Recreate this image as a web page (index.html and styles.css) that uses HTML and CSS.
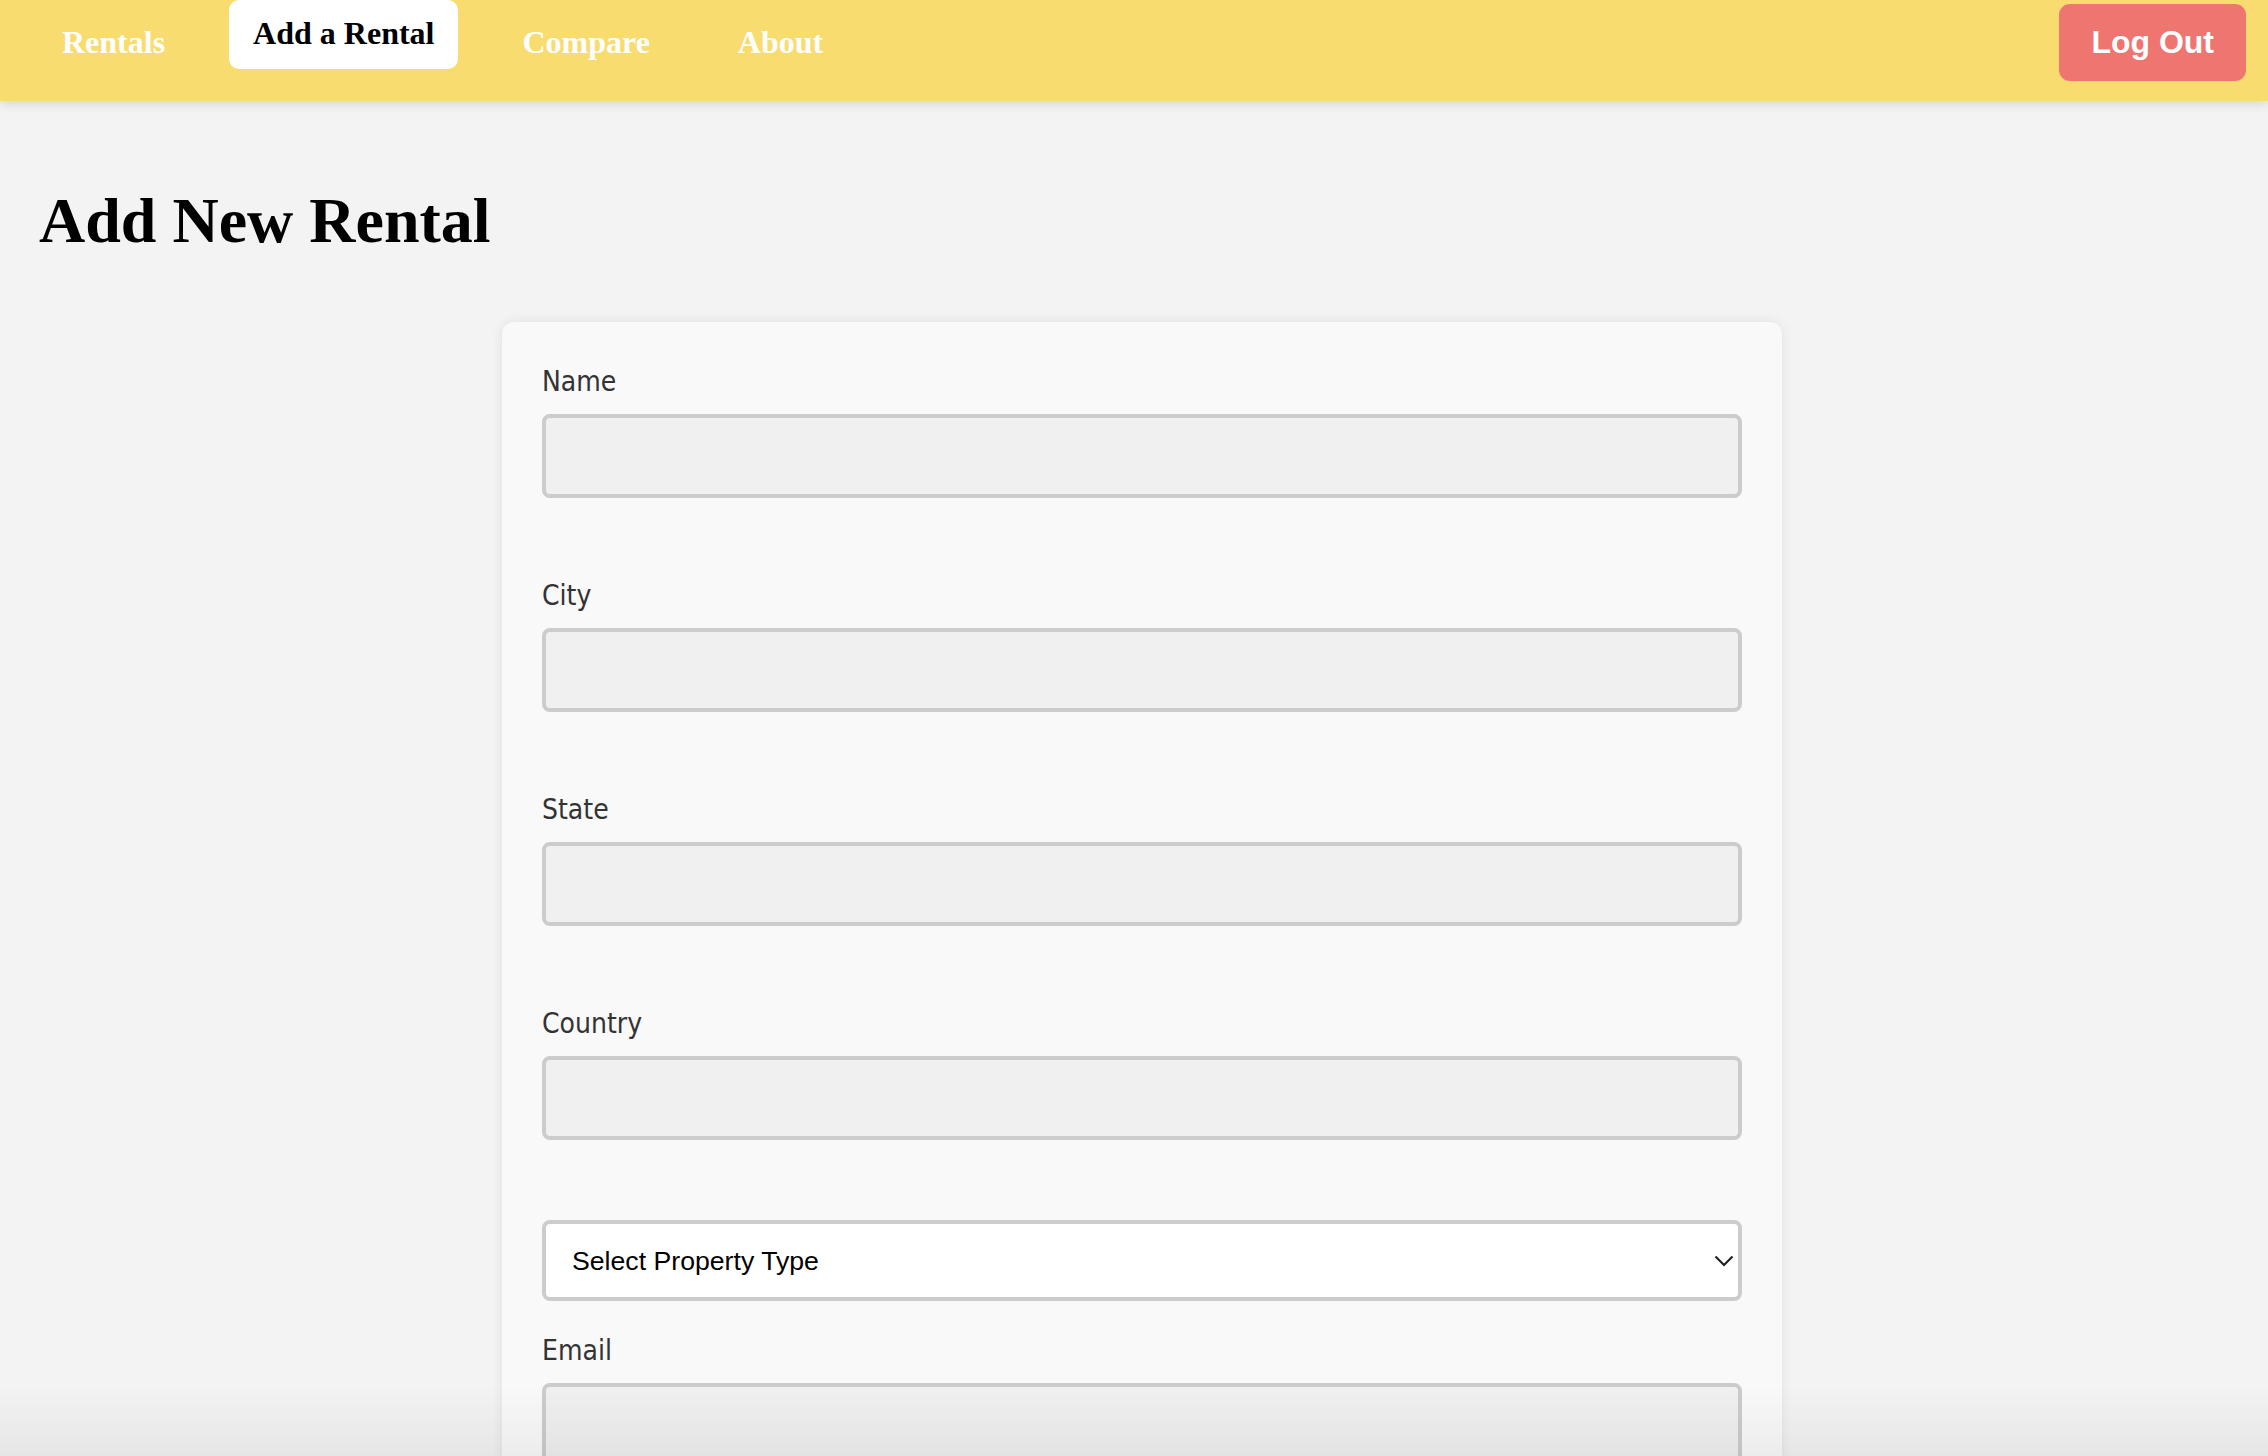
FILE: index.html
```html
<!DOCTYPE html>
<html lang="en">
<head>
<meta charset="utf-8">
<title>Add New Rental</title>
<link rel="stylesheet" href="styles.css">
</head>
<body>
<nav class="navbar">
  <a class="nav-link" href="#">Rentals</a>
  <a class="nav-link active" href="#">Add a Rental</a>
  <a class="nav-link" href="#">Compare</a>
  <a class="nav-link" href="#">About</a>
  <button class="logout" type="button">Log Out</button>
</nav>
<main class="main">
  <h1 class="page-title">Add New Rental</h1>
  <div class="form-wrap">
    <form class="card">
      <div class="field">
        <label class="label" for="name">Name</label>
        <input class="input" id="name" type="text">
      </div>
      <div class="field">
        <label class="label" for="city">City</label>
        <input class="input" id="city" type="text">
      </div>
      <div class="field">
        <label class="label" for="state">State</label>
        <input class="input" id="state" type="text">
      </div>
      <div class="field">
        <label class="label" for="country">Country</label>
        <input class="input" id="country" type="text">
      </div>
      <div class="select-wrap">
        <select class="select">
          <option>Select Property Type</option>
          <option>Apartment</option>
          <option>House</option>
          <option>Condo</option>
        </select>
        <svg class="chevron" width="20" height="12" viewBox="0 0 20 12" aria-hidden="true">
          <polyline points="1.5,1.5 10,10 18.5,1.5" fill="none" stroke="#222" stroke-width="2.2"/>
        </svg>
      </div>
      <div class="field">
        <label class="label" for="email">Email</label>
        <input class="input" id="email" type="email">
      </div>
    </form>
  </div>
</main>
<div class="bottom-shade"></div>
</body>
</html>
```
FILE: styles.css
```css
* { box-sizing: border-box; }

html, body {
  margin: 0;
  padding: 0;
}

body {
  background: #f3f3f3;
  font-family: "Liberation Serif", "Times New Roman", serif;
}

.navbar {
  height: 101px;
  background: #f8dc70;
  display: flex;
  align-items: flex-start;
  gap: 40px;
  padding-left: 38px;
  box-shadow: 0 3px 10px rgba(0, 0, 0, 0.12);
  position: relative;
  z-index: 2;
}

.nav-link {
  font-family: "Liberation Serif", "Times New Roman", serif;
  font-weight: bold;
  font-size: 32px;
  line-height: 36px;
  color: #ffffff;
  text-decoration: none;
  padding: 24px 24px 0;
}

.nav-link.active {
  background: #ffffff;
  color: #000000;
  padding: 15px 24px 18px;
  border-radius: 10px;
}

.logout {
  margin-left: auto;
  margin-top: 4px;
  margin-right: 22px;
  height: 77px;
  padding: 0 32px;
  border: none;
  border-radius: 11px;
  background: #ef7571;
  color: #ffffff;
  font-family: "Liberation Sans", Arial, sans-serif;
  font-weight: bold;
  font-size: 32px;
  line-height: 37px;
}

.main {
  padding-top: 40px;
}

.page-title {
  margin: 43px 0 43px 39px;
  font-family: "Liberation Serif", "Times New Roman", serif;
  font-weight: bold;
  font-size: 64px;
  line-height: 74px;
  color: #000;
}

.form-wrap {
  display: flex;
  justify-content: center;
  padding-left: 16px;
  padding-top: 21px;
  padding-bottom: 40px;
}

.card {
  width: 1280px;
  background: #f9f9f9;
  border-radius: 12px;
  padding: 44px 40px 40px;
  box-shadow: 0 0 12px rgba(0, 0, 0, 0.08);
}

.field {
  margin-bottom: 82px;
}

.label {
  display: block;
  font-family: "DejaVu Sans Condensed", "DejaVu Sans", sans-serif;
  font-stretch: condensed;
  font-size: 28px;
  line-height: 32px;
  color: #333333;
  margin-bottom: 16px;
}

.input {
  display: block;
  width: 100%;
  height: 84px;
  background: #f0f0f0;
  border: 4px solid #cccccc;
  border-radius: 8px;
  padding: 0 20px;
  font-size: 26px;
  outline: none;
}

.select-wrap {
  position: relative;
  margin-top: -2px;
  margin-bottom: 34px;
}

.select {
  display: block;
  width: 100%;
  height: 81px;
  -webkit-appearance: none;
  appearance: none;
  background: #ffffff;
  border: 4px solid #cccccc;
  border-radius: 8px;
  padding: 0 26px;
  font-family: "Liberation Sans", Arial, sans-serif;
  font-size: 26.67px;
  color: #000000;
  outline: none;
}

.chevron {
  position: absolute;
  right: 8px;
  top: 35px;
  pointer-events: none;
}

.bottom-shade {
  position: fixed;
  left: 0;
  right: 0;
  bottom: 0;
  height: 70px;
  background: linear-gradient(to bottom, rgba(0, 0, 0, 0), rgba(0, 0, 0, 0.05));
  pointer-events: none;
  z-index: 5;
}
```
